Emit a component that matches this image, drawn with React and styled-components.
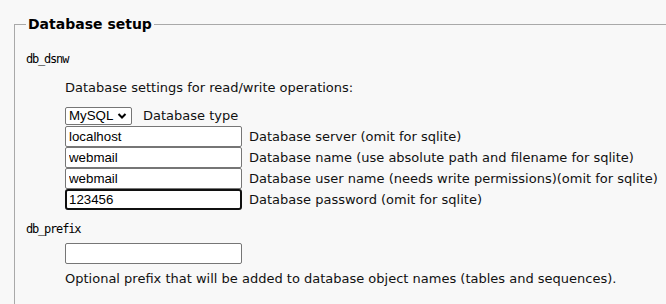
import React from 'react';
import styled, { createGlobalStyle } from 'styled-components';

const GlobalStyle = createGlobalStyle`
  html, body {
    margin: 0;
    padding: 0;
    background: #f8f8f8;
  }
  body {
    font-family: "DejaVu Sans", Verdana, sans-serif;
    color: #111;
  }
`;

const Page = styled.div`
  padding: 15px 0 0 14px;
  overflow: hidden;
`;

const Fieldset = styled.fieldset`
  margin: 0;
  width: 720px;
  padding: 0 0 20px 11px;
  border: 1px solid #a9a9a9;
  border-right: none;
  min-width: 0;
`;

const Legend = styled.legend`
  margin-left: 0;
  padding: 0 2px;
  font-family: "DejaVu Sans", Verdana, sans-serif;
  font-weight: bold;
  font-size: 14px;
  line-height: 18px;
  color: #000;
`;

const Term = styled.div`
  font-family: "DejaVu Sans Mono", "Liberation Mono", monospace;
  font-size: 12px;
  letter-spacing: -1.2px;
  line-height: 16px;
  color: #000;
  margin-top: ${({ $top }) => $top}px;
`;

const Definition = styled.div`
  margin-left: 39px;
  margin-top: ${({ $top }) => $top}px;
`;

const Note = styled.div`
  font-size: 13px;
  line-height: 16px;
  color: #111;
  margin-top: ${({ $top }) => $top || 0}px;
  white-space: nowrap;
`;

const FieldGrid = styled.div`
  display: grid;
  grid-template-columns: 177px auto;
  column-gap: 7px;
  align-items: center;
  margin-top: 11px;
`;

const TypeRow = styled.div`
  grid-column: 1 / 3;
  display: flex;
  align-items: center;
  gap: 11px;
  margin-bottom: 1px;
`;

const Select = styled.select`
  appearance: none;
  width: 67px;
  height: 18px;
  box-sizing: border-box;
  font-family: "Liberation Sans", Arial, sans-serif;
  font-size: 13.3px;
  line-height: 16px;
  border: 1px solid #767676;
  border-radius: 2px;
  color: #000;
  padding: 0 0 0 3px;
  background: #fff
    url("data:image/svg+xml;utf8,<svg xmlns='http://www.w3.org/2000/svg' width='10' height='8' viewBox='0 0 10 8'><path d='M1.5 2 L5 5.5 L8.5 2' fill='none' stroke='black' stroke-width='2'/></svg>")
    no-repeat right 4px center;
`;

const Input = styled.input`
  width: 177px;
  height: 21px;
  box-sizing: border-box;
  margin: 0;
  padding: 1px 3px;
  font-family: "Liberation Sans", Arial, sans-serif;
  font-size: 13.3px;
  color: #000;
  background: #fff;
  border: ${({ $focused }) => ($focused ? '2px solid #101010' : '1px solid #767676')};
  border-radius: ${({ $focused }) => ($focused ? '3px' : '2px')};
  outline: none;
  padding-left: ${({ $focused }) => ($focused ? '2px' : '3px')};
`;

const FieldLabel = styled.span`
  font-size: 13px;
  line-height: 16px;
  color: #111;
  white-space: nowrap;
`;

const PrefixInput = styled(Input)`
  display: block;
`;

const fields = [
  { value: 'localhost', label: 'Database server (omit for sqlite)' },
  { value: 'webmail', label: 'Database name (use absolute path and filename for sqlite)' },
  { value: 'webmail', label: 'Database user name (needs write permissions)(omit for sqlite)' },
  { value: '123456', label: 'Database password (omit for sqlite)', focused: true },
];

export default function App() {
  return (
    <Page>
      <GlobalStyle />
      <Fieldset>
        <Legend>Database setup</Legend>
        <Term $top={18}>db_dsnw</Term>
        <Definition $top={13}>
          <Note>Database settings for read/write operations:</Note>
          <FieldGrid>
            <TypeRow>
              <Select defaultValue="mysql">
                <option value="mysql">MySQL</option>
                <option value="pgsql">PostgreSQL</option>
                <option value="sqlite">SQLite</option>
              </Select>
              <FieldLabel>Database type</FieldLabel>
            </TypeRow>
            {fields.map((f, i) => (
              <React.Fragment key={i}>
                <Input defaultValue={f.value} $focused={f.focused} />
                <FieldLabel>{f.label}</FieldLabel>
              </React.Fragment>
            ))}
          </FieldGrid>
        </Definition>
        <Term $top={11}>db_prefix</Term>
        <Definition $top={6}>
          <PrefixInput defaultValue="" />
          <Note $top={7}>Optional prefix that will be added to database object names (tables and sequences).</Note>
        </Definition>
      </Fieldset>
    </Page>
  );
}
